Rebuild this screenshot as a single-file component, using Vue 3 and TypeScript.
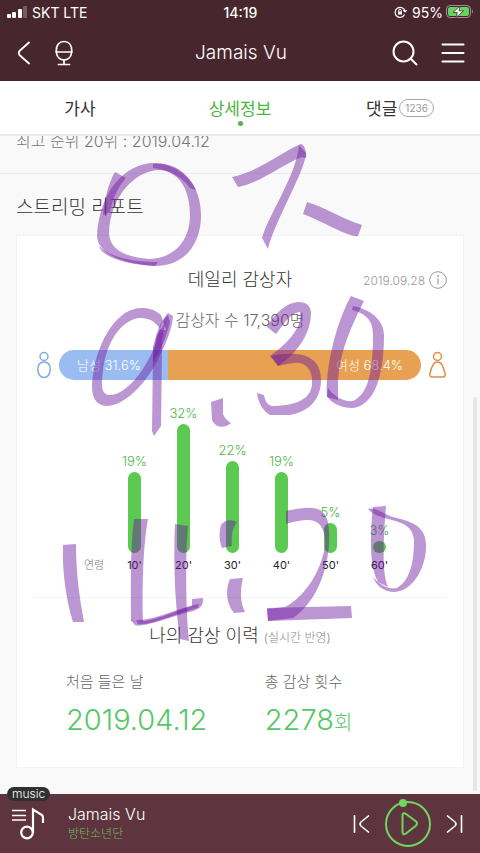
<script setup lang="ts">
import { ref } from 'vue'

interface AgeBar {
  age: string
  percent: number
  height: number
}

const activeTab = ref('info')

const ages: AgeBar[] = [
  { age: "10'", percent: 19, height: 81 },
  { age: "20'", percent: 32, height: 129 },
  { age: "30'", percent: 22, height: 92 },
  { age: "40'", percent: 19, height: 81 },
  { age: "50'", percent: 5, height: 30 },
  { age: "60'", percent: 3, height: 12 },
]

// Highlighter strokes; each one is translucent so crossings come out darker.
const strokes: string[] = [
  'M97 235C100 192 124 163 155 163C185 163 201 188 201 215C201 246 183 266 155 266C125 264 97 255 97 235ZM109 233C110 197 135 170 160 170C181 172 190 192 190 215C190 240 175 258 150 259C125 257 110 250 109 233Z',
  'M115 172L126 178C117 188 112 201 110 212L103 215C105 198 108 184 115 172Z',
  'M153 164C172 162 190 176 196 190L190 188C182 177 170 170 153 168Z',
  'M99 246C110 258 135 262 158 262L155 266C130 265 102 258 99 246Z',
  'M232 177C258 172 278 154 301 144C305 145 307 154 306 158L302 157C285 163 258 184 238 187Z',
  'M299 145L306 153C305 172 275 220 268 249L262 238C268 216 297 174 299 145Z',
  'M307 202C325 207 340 218 362 225L358 236C350 238 324 222 303 214Z',
  'M161 330C154 320 149 318 138 318C118 322 106 346 103 370C101 385 101 395 110 395C125 395 145 372 155 345C158 335 162 319 168 313L173 316C172 330 166 343 160 355C150 378 128 405 107 406C94 405 90 395 93 375C97 348 108 325 125 313C138 305 152 307 161 315L166 330Z',
  'M157 335L168 318C162 330 162 342 162 350L161 426L154 436L152 431L153 355Z',
  'M153 347C157 333 160 320 168 315L170 322C166 338 160 352 153 362Z',
  'M267 327L276 334C283 325 290 313 300 312C303 325 290 342 270 356L278 366C295 355 311 335 311 313C311 305 305 302 298 302C286 303 275 313 267 327Z',
  'M271 356C285 353 300 353 308 357C318 362 321 370 321 380C321 400 308 412 290 415L270 415C262 410 258 402 257 393L264 395C265 402 268 405 272 406C290 406 310 402 312 385C313 372 308 365 300 363C292 362 285 365 278 366Z',
  'M351 296L364 301C352 325 340 350 338 380L338 400L327 397C325 370 335 325 351 296Z',
  'M353 306C370 309 384 320 384 335C384 375 375 405 353 408C340 408 330 402 327 396L328 388C335 398 345 402 353 401C367 395 373 375 373 335C373 322 368 314 352 310Z',
  'M211 402L223 398L223 414C225 419 228 421 231 423C226 428 216 429 212 420Z',
  'M63 545L76 544C76 575 80 600 84 622L73 622C66 600 62 570 63 545Z',
  'M134 519L148 519C143 545 142 590 143 622L131 621C131 590 130 550 134 519Z',
  'M131 620C145 626 175 611 192 606L192 599L203 598C204 606 199 610 189 612C170 617 143 628 135 625Z',
  'M136 620C155 621 176 608 199 604L198 608C180 612 150 626 138 624Z',
  'M175 524L188 526C185 560 186 610 189 641L180 639C176 610 173 570 175 524Z',
  'M221 525C224 520 231 519 237 522C232 528 231 538 232 546L222 548C219 540 219 532 221 525Z',
  'M230 579L243 578C240 590 240 602 245 612L234 613C225 602 226 588 230 579Z',
  'M286 511C300 508 312 506 320 510C328 515 330 525 329 545C326 580 312 605 293 618L268 621L267 609L285 607C305 597 322 570 325 545C326 530 320 521 310 520C300 520 293 522 286 524Z',
  'M267 608L351 606L352 618L268 621Z',
  'M373 507L386 506C383 540 382 575 388 587L378 582C369 565 370 535 373 507Z',
  'M368 509C375 507 380 512 390 516C405 521 427 522 426 547C426 565 415 590 395 592C383 592 376 585 373 577C380 585 388 590 397 588C411 580 414 560 414 540C413 525 400 522 388 519C380 517 372 514 368 509Z',
]
</script>

<template>
  <div class="screen">
    <header class="top">
      <div class="status">
        <div class="carrier">
          <svg width="20" height="12" viewBox="0 0 20 12" fill="#fff" aria-hidden="true">
            <rect x="0" y="8" width="4" height="4" rx="1" />
            <rect x="5" y="6" width="4" height="6" rx="1" />
            <rect x="11" y="3" width="4" height="9" rx="1" />
            <rect x="16" y="0" width="4" height="12" rx="1" opacity=".25" />
          </svg>
          <span>SKT LTE</span>
        </div>
        <span class="clock">14:19</span>
        <div class="power">
          <svg width="13" height="12" viewBox="0 0 13 12" fill="none" stroke="#fff" aria-hidden="true">
            <path d="M10.6 8.6A5 5 0 1 1 11 5.2M9.3 4.4L11.1 6L12.6 4.1" stroke-width="1.2" />
            <path d="M4 5.5h4v3H4z" fill="#fff" stroke="none" />
            <path d="M4.8 5.8V4.4a1.2 1.2 0 0 1 2.4 0v1.4" />
          </svg>
          <span>95%</span>
          <svg class="battery" width="28" height="14" viewBox="0 0 28 14" aria-hidden="true">
            <rect x=".5" y=".5" width="24" height="12" rx="3.5" fill="none" stroke="#a58f94" />
            <rect x="2" y="2" width="21" height="9" rx="2" fill="#66d465" />
            <path d="M26 4.5q2 2 0 4z" fill="#a58f94" />
            <path d="M14 1L7 7.5h4.3L10 12.5L17.5 5.800h-4.500z" fill="#fff" stroke="#48262e" stroke-width=".8" />
          </svg>
        </div>
      </div>
      <nav class="bar">
        <div class="side">
          <button type="button" aria-label="뒤로">
            <svg width="14" height="24" viewBox="0 0 14 24" fill="none" stroke="#fff" stroke-width="1.8" stroke-linecap="round">
              <path d="M12 1.500L3 9.500Q.5 12 3 14.500L12 22.500" />
            </svg>
          </button>
          <button type="button" aria-label="음성 검색">
            <svg width="20" height="26" viewBox="0 0 20 26" fill="none" stroke="#fff" stroke-width="1.700" stroke-linecap="round">
              <path d="M2 12h16M10 20v4M4.500 24.500h11" />
              <path d="M10 1.500C5 1.500 2.300 5 2.300 10.500S5 20 10 20s7.700-4 7.700-9.500S15 1.500 10 1.500z" />
            </svg>
          </button>
        </div>
        <h1>Jamais Vu</h1>
        <div class="side end">
          <button type="button" aria-label="검색">
            <svg width="26" height="26" viewBox="0 0 26 26" fill="none" stroke="#fff" stroke-width="2" stroke-linecap="round">
              <circle cx="11.500" cy="11.500" r="10" />
              <path d="M18.500 18.500L24.500 24.500" />
            </svg>
          </button>
          <button type="button" aria-label="메뉴">
            <svg width="24" height="22" viewBox="0 0 24 22" stroke="#fff" stroke-width="2" stroke-linecap="round">
              <path d="M1.500 2.500h21M1.500 11h21M1.500 19.500h21" />
            </svg>
          </button>
        </div>
      </nav>
    </header>

    <div class="tabs" role="tablist">
      <button type="button" role="tab" :aria-selected="activeTab === 'lyrics'" :class="{ active: activeTab === 'lyrics' }" @click="activeTab = 'lyrics'">가사</button>
      <button type="button" role="tab" :aria-selected="activeTab === 'info'" :class="{ active: activeTab === 'info' }" @click="activeTab = 'info'">상세정보</button>
      <button type="button" role="tab" :aria-selected="activeTab === 'replies'" :class="{ active: activeTab === 'replies' }" @click="activeTab = 'replies'">댓글<span class="count">1236</span></button>
    </div>

    <main class="content">
      <p class="rank">최고 순위 20위 : 2019.04.12</p>
      <h2>스트리밍 리포트</h2>

      <section class="card">
        <div class="card-head">
          <h3>데일리 감상자</h3>
          <span class="date">2019.09.28</span>
          <button type="button" class="info" aria-label="안내">
            <svg width="18" height="18" viewBox="0 0 18 18" fill="none" stroke="#999">
              <circle cx="9" cy="9" r="8.300" />
              <path d="M9 7.500V13.500" stroke-width="1.200" />
              <circle cx="9" cy="5" r=".9" fill="#999" stroke="none" />
            </svg>
          </button>
        </div>
        <p class="total">감상자 수 17,390명</p>

        <div class="gender">
          <svg width="14" height="28" viewBox="0 0 14 28" fill="none" stroke="#7fabe2" stroke-width="1.500" aria-hidden="true">
            <circle cx="7" cy="5.500" r="4" />
            <path d="M7 11C3 11 .8 14 .8 18.500S3.300 26.500 7 26.500s6.200-3.500 6.200-8S11 11 7 11z" />
          </svg>
          <div class="gauge">
            <span class="male">남성 31.6%</span>
            <span class="female">여성 68.4%</span>
          </div>
          <svg width="17" height="28" viewBox="0 0 17 28" fill="none" stroke="#df8d45" stroke-width="1.500" aria-hidden="true">
            <circle cx="8.500" cy="5.500" r="4" />
            <path d="M8.500 11C4.500 11 3 15 1.200 21.500Q0 26 3 26h11Q17 26 15.800 21.500C14 15 12.500 11 8.500 11z" />
          </svg>
        </div>

        <div class="chart">
          <span class="axis">연령</span>
          <div v-for="bar in ages" :key="bar.age" class="column">
            <span class="value">{{ bar.percent }}%</span>
            <span class="stick" :style="{ height: bar.height + 'px' }"></span>
            <span class="age">{{ bar.age }}</span>
          </div>
        </div>

        <div class="history">
          <h3>나의 감상 이력 <small>(실시간 반영)</small></h3>
          <dl>
            <div>
              <dt>처음 들은 날</dt>
              <dd>2019.04.12</dd>
            </div>
            <div>
              <dt>총 감상 횟수</dt>
              <dd>2278<span class="unit">회</span></dd>
            </div>
          </dl>
        </div>
      </section>
      <span class="scrollbar"></span>
    </main>

    <footer class="player">
      <span class="badge">music</span>
      <button type="button" class="playlist" aria-label="재생 목록">
        <svg width="34" height="34" viewBox="0 0 34 34" fill="none" stroke="#fff" aria-hidden="true">
          <path d="M0 3.500h14M0 8.500h14M0 13h14" stroke-width="1.300" />
          <circle cx="15" cy="25.500" r="5.800" stroke-width="2.200" />
          <path d="M21 26V2.500L30 8Q31 9 31 11V16" stroke-width="2.200" />
        </svg>
      </button>
      <div class="song">
        <strong>Jamais Vu</strong>
        <span>방탄소년단</span>
      </div>
      <div class="controls">
        <button type="button" aria-label="이전 곡">
          <svg width="18" height="20" viewBox="0 0 18 20" fill="none" stroke="#fff" stroke-width="1.600">
            <path d="M1.500 1v18M16 1.500L8 8Q6 10 8 12L16 18.500" />
          </svg>
        </button>
        <button type="button" class="play" aria-label="재생">
          <svg width="48" height="50" viewBox="0 0 48 50" fill="none" stroke="#70d65e" stroke-width="2">
            <circle cx="24" cy="25" r="22" />
            <circle cx="19" cy="4" r="4" fill="#70d65e" stroke="none" />
            <path d="M18.500 16.500Q18.500 13 22 15L31.500 22Q34.500 24.500 31.500 27L22 34.500Q18.500 36.500 18.500 33z" />
          </svg>
        </button>
        <button type="button" aria-label="다음 곡">
          <svg width="18" height="20" viewBox="0 0 18 20" fill="none" stroke="#fff" stroke-width="1.600">
            <path d="M16.500 1v18M2 1.500L10 8Q12 10 10 12L2 18.500" />
          </svg>
        </button>
      </div>
    </footer>

    <svg class="ink" viewBox="0 0 480 853" aria-hidden="true">
      <path v-for="(d, i) in strokes" :key="i" :d="d" fill-rule="evenodd" />
    </svg>
  </div>
</template>

<style>
body {
  background: #f9f9f9;
}
</style>

<style scoped>
* {
  box-sizing: border-box;
}

.screen {
  position: relative;
  display: flex;
  flex-direction: column;
  height: 100vh;
  overflow: hidden;
  background: #f9f9f9;
  color: #333;
  font-family: Inter, 'Noto Sans CJK KR', sans-serif;
  font-weight: 300;
}

h1, h2, h3, p, dl, dd {
  margin: 0;
  font-weight: 300;
}

button {
  display: flex;
  align-items: center;
  justify-content: center;
  margin: 0;
  padding: 0;
  border: 0;
  background: none;
  color: inherit;
  font: inherit;
}

svg {
  display: block;
  flex: none;
}

.top {
  flex: none;
  background: #48262e;
  color: #fff;
}

.status {
  display: grid;
  grid-template-columns: 1fr auto 1fr;
  align-items: center;
  height: 24px;
  padding: 0 6px 0 7px;
  font-size: 14px;
  font-weight: 400;
}

.clock {
  font-weight: 500;
}

.carrier, .power {
  display: flex;
  align-items: center;
  gap: 5px;
}

.power {
  justify-content: flex-end;
}

.battery {
  margin-left: -2px;
}

.bar {
  display: grid;
  grid-template-columns: 1fr auto 1fr;
  align-items: center;
  height: 57px;
  padding: 0 15px 0 17px;
}

.bar h1 {
  font-size: 19px;
}

.side {
  display: flex;
  align-items: center;
  gap: 23px;
}

.side.end {
  justify-content: flex-end;
}

.tabs {
  display: grid;
  flex: none;
  grid-template-columns: repeat(3, 1fr);
  height: 55px;
  border-bottom: 2px solid #ebebeb;
  background: #fff;
  font-size: 17px;
  font-weight: 400;
}

.tabs button {
  position: relative;
  gap: 2px;
}

.tabs .active {
  color: #4db63f;
}

.tabs .active::after {
  position: absolute;
  bottom: 8px;
  width: 5px;
  height: 5px;
  border-radius: 50%;
  background: #4db63f;
  content: '';
}

.count {
  padding: 0 5px;
  border: 1px solid #aaa;
  border-radius: 9px;
  color: #999;
  font-size: 10px;
  line-height: 16px;
}

.content {
  position: relative;
  flex: 1;
  min-height: 0;
  overflow: hidden;
}

.rank {
  height: 38px;
  padding: 0 16px;
  border-bottom: 1px solid #ececec;
  color: #777;
  font-size: 16px;
  line-height: 10px;
}

h2 {
  padding: 22px 16px 15px;
  font-size: 19px;
  line-height: 24px;
}

.card {
  margin: 0 16px;
  padding: 30px 16px 18px;
  border: 1px solid #f3f3f3;
  background: #fff;
}

.card-head {
  display: grid;
  grid-template-columns: 1fr auto 1fr;
  align-items: center;
  height: 28px;
}

.card-head h3 {
  grid-column: 2;
}

h3 {
  font-size: 18px;
  line-height: 28px;
}

.date {
  padding-right: 22px;
  grid-column: 3;
  grid-row: 1;
  justify-self: end;
  color: #999;
  font-size: 12px;
}

.info {
  grid-column: 3;
  grid-row: 1;
  justify-self: end;
}

.total {
  padding-top: 14px;
  color: #666;
  font-size: 16px;
  line-height: 24px;
  text-align: center;
}

.gender {
  display: flex;
  align-items: center;
  gap: 8px;
  margin-top: 18px;
  padding: 0 1px 0 4px;
}

.gauge {
  display: flex;
  flex: 1;
  height: 30px;
  overflow: hidden;
  border-radius: 15px;
  color: #fff;
  font-size: 13px;
  line-height: 30px;
}

.male {
  width: 30%;
  padding-left: 18px;
  background: #9bbcf1;
  white-space: nowrap;
}

.female {
  flex: 1;
  padding-right: 18px;
  background: #e8a152;
  text-align: right;
}

.chart {
  display: grid;
  grid-template-columns: 1fr repeat(6, 49px);
  align-items: end;
  margin: 23px 43px 0 51px;
}

.axis, .age {
  color: #222;
  font-size: 11px;
  line-height: 24px;
}

.age {
  font-weight: 400;
}

.axis {
  color: #777;
}

.column {
  display: flex;
  flex-direction: column;
  align-items: center;
}

.value {
  color: #4db647;
  font-size: 13px;
  line-height: 21px;
}

.stick {
  width: 13px;
  border-radius: 7px;
  background: #5aca50;
}

.history {
  margin-top: 20px;
  padding: 24px 0 0;
  border-top: 1px solid #f3f3f3;
}

.history h3 {
  text-align: center;
}

small {
  color: #888;
  font-size: 12px;
}

dl {
  display: grid;
  grid-template-columns: 12fr 11fr;
  padding: 18px 0 0 33px;
}

dt {
  color: #666;
  font-size: 15px;
  line-height: 24px;
}

dd {
  color: #55c766;
  font-size: 29px;
  line-height: 52px;
}

.unit {
  font-size: 20px;
}

.scrollbar {
  position: absolute;
  top: 261px;
  right: 3px;
  bottom: 3px;
  width: 4px;
  border-radius: 2px;
  background: #e6e6e6;
}

.player {
  position: relative;
  display: flex;
  flex: none;
  align-items: center;
  height: 59px;
  padding: 0 17px 0 12px;
  background: #5e343e;
  color: #fff;
}

.badge {
  position: absolute;
  top: -7px;
  left: 7px;
  padding: 0 5px;
  border-radius: 7px;
  background: #303030;
  font-size: 12px;
  line-height: 14px;
}

.song {
  display: flex;
  flex: 1;
  flex-direction: column;
  padding-left: 22px;
  line-height: 20px;
}

.song strong {
  font-size: 16px;
  font-weight: 300;
}

.song span {
  color: #70bf57;
  font-size: 12px;
}

.controls {
  display: flex;
  align-items: center;
  gap: 13px;
}

.ink {
  position: absolute;
  top: 0;
  left: 0;
  width: 100%;
  pointer-events: none;
}

.ink path {
  fill: rgba(108, 25, 160, 0.46);
}
</style>
